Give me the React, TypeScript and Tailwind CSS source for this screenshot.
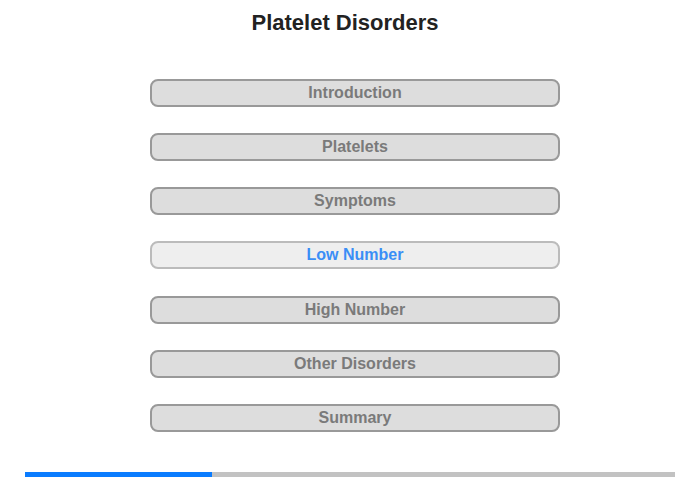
export default function App() {
  const items = [
    'Introduction',
    'Platelets',
    'Symptoms',
    'Low Number',
    'High Number',
    'Other Disorders',
    'Summary',
  ];
  const active = 'Low Number';

  return (
    <div className="w-[700px] h-[480px] bg-white font-['Liberation_Sans',Arial,sans-serif] relative">
      <h1 className="pt-[10px] pr-[10px] text-center text-[22px] leading-[26px] font-bold text-[#222]">
        Platelet Disorders
      </h1>

      <div className="mt-[43px] pl-[10px] flex flex-col items-center gap-[26px]">
        {items.map((label, i) => (
          <button
            key={label}
            className={
              (i === 4 ? 'mt-[1px] ' : '') +
              (label === active
                ? 'w-[410px] h-[28px] rounded-[8px] border-2 border-[#bbbbbb] bg-[#eeeeee] text-[16px] font-bold text-[#3a8ef6]'
                : 'w-[410px] h-[28px] rounded-[8px] border-2 border-[#999999] bg-[#dddddd] text-[16px] font-bold text-[#7a7a7a]')
            }
          >
            {label}
          </button>
        ))}
      </div>

      <div className="absolute left-[25px] top-[472px] w-[650px] h-[5px] bg-[#c2c2c2]">
        <div className="h-full w-[187px] bg-[#0a7cff]" />
      </div>
    </div>
  );
}
